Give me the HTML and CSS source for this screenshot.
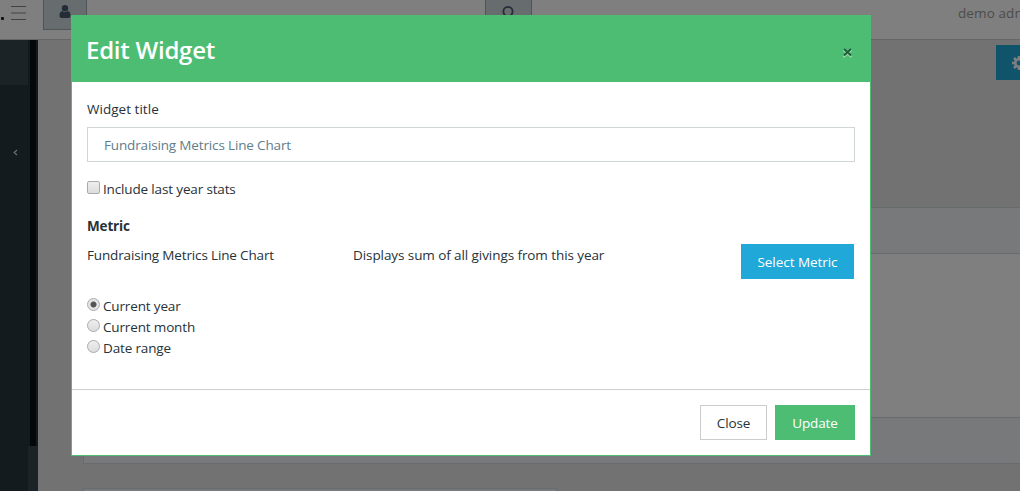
FILE: index.html
```html
<!DOCTYPE html>
<html lang="en">
<head>
<meta charset="utf-8">
<title>Edit Widget</title>
<link rel="stylesheet" href="styles.css">
</head>
<body>
<div class="app">
  <header class="topbar">
    <span class="brand-dot"></span>
    <svg class="menu" width="15" height="15" viewBox="0 0 15 15"><path d="M0 .5h15M0 7h15M0 13.500h15"/></svg>
    <div class="search">
      <span class="addon user"><svg width="12" height="13" viewBox="0 0 12 13"><circle cx="6" cy="3.300" r="3.200"/><path d="M3 6c2 1.500 4 1.500 6 0 2 .5 2.500 2.500 2.500 4.500C11.500 12 11 13 9.500 13h-7C1 13 .5 12 .5 10.500.5 8.500 1 6.500 3 6z"/></svg></span>
      <span class="search-field"></span>
      <span class="addon find"><svg width="14" height="14" viewBox="0 0 14 14"><circle cx="6" cy="5.500" r="4.600"/><path d="M9.500 9.500l4 4"/></svg></span>
    </div>
    <span class="account">demo admin</span>
  </header>
  <div class="workspace">
    <nav class="sidebar"><div class="nav-head"></div><span class="collapse"><svg width="5" height="7" viewBox="0 0 5 7"><path d="M4 1L1.200 3.500 4 6"/></svg></span></nav>
    <div class="scroll"><div class="track"></div><div class="thumb"></div></div>
    <main class="main">
      <div class="toolbar"><span class="settings"><svg width="14" height="14" viewBox="0 0 14 14"><circle cx="7" cy="7" r="3.700"/><path d="M7 0v3M7 11v3M0 7h3M11 7h3M2 2l2.200 2.200M9.800 9.800L12 12M12 2L9.800 4.200M4.200 9.800L2 12"/></svg></span></div>
      <section class="card"><div class="card-head"></div><div class="card-body"></div><div class="card-foot"></div></section>
      <section class="card half"><div class="card-head"></div></section>
    </main>
  </div>
</div>
<div class="backdrop">
  <div class="modal">
    <div class="modal-header"><h4 class="title">Edit Widget</h4><svg class="dismiss" width="11" height="11" viewBox="0 0 11 11"><path class="glow" d="M1.500 3l8 7M9.500 3l-8 7"/><path class="cross" d="M2 2l7 6.500M9 2L2 8.500"/></svg></div>
    <div class="modal-body">
      <label class="label">Widget title</label>
      <div class="field">Fundraising Metrics Line Chart</div>
      <label class="option include"><span class="checkbox"></span><span>Include last year stats</span></label>
      <div class="metric-title">Metric</div>
      <div class="metric-row">
        <div class="metric-name">Fundraising Metrics Line Chart</div>
        <div class="metric-desc">Displays sum of all givings from this year</div>
        <div class="btn primary">Select Metric</div>
      </div>
      <div class="radios">
        <label class="option"><span class="radio checked"></span><span>Current year</span></label>
        <label class="option"><span class="radio"></span><span>Current month</span></label>
        <label class="option"><span class="radio"></span><span>Date range</span></label>
      </div>
    </div>
    <div class="modal-footer"><div class="btn secondary">Close</div><div class="btn success">Update</div></div>
  </div>
</div>
</body>
</html>
```
FILE: styles.css
```css
* { box-sizing: border-box; }
body { margin: 0; height: 491px; overflow: hidden; font: 13.5px/21px "Open Sans", "Noto Sans", sans-serif; letter-spacing: -.15px; color: #263238; }
svg { display: block; flex: none; fill: none; }
.app { height: 491px; display: flex; flex-direction: column; background: #e4e5e6; overflow: hidden; }
.topbar { height: 40px; flex: none; display: flex; align-items: flex-start; background: #fff; border-bottom: 1px solid #c8cdd0; overflow: hidden; }
.brand-dot { flex: none; width: 3px; height: 3px; margin: 17px 8px 0 1px; background: #222; border-radius: 1px; }
.menu { margin: 6px 17px 0 -1px; stroke: #858585; stroke-width: 1.200; }
.search { flex: none; display: flex; width: 489px; height: 30px; }
.addon { display: flex; justify-content: center; background: #cfd8dc; border: solid #9aaab2; border-width: 0 1px 1px; }
.user { width: 44px; padding-top: 5px; }
.user svg { fill: #455a70; }
.search-field { flex: 1; border-bottom: 1px solid #ccc; }
.find { width: 47px; padding-top: 6px; }
.find svg { stroke: #455a70; stroke-width: 1.800; }
.account { margin: 3px 0 0 426px; color: #999; white-space: nowrap; letter-spacing: .1px; }
.workspace { flex: 1; display: flex; min-height: 0; }
.sidebar { width: 28px; background: #29363d; }
.nav-head { height: 45px; background: #37474f; }
.collapse { display: block; padding: 64px 0 0 13px; }
.collapse svg { stroke: #cfd8dc; stroke-width: 1.300; }
.scroll { width: 10px; display: flex; flex-direction: column; background: #29363d; }
.track { height: 406px; margin: 0 2px; background: #0b1013; }
.thumb { flex: 1; background: #37474f; }
.main { flex: 1; padding: 5px 0 0 45px; min-width: 0; }
.toolbar { height: 162px; display: flex; justify-content: flex-end; }
.settings { width: 24px; height: 35px; background: #20a8d8; padding: 11px 0 0 16px; overflow: hidden; }
.settings svg { stroke: #fff; stroke-width: 2.600; }
.card { border: 1px solid #cfd8dc; border-right: 0; margin-bottom: 24px; background: #fff; }
.card-head { height: 46px; background: #f0f3f5; border-bottom: 1px solid #cfd8dc; }
.card-body { height: 163px; }
.card-foot { height: 46px; background: #f0f3f5; border-top: 1px solid #cfd8dc; }
.half { width: 474px; border-right: 1px solid #cfd8dc; }
.backdrop { position: absolute; inset: 0; background: rgba(0,0,0,.5); padding: 15px 0 0 71px; }
.modal { width: 800px; height: 441px; display: flex; flex-direction: column; background: #fff; border: 1px solid #4dbd74; }
.modal-header { height: 66px; display: flex; justify-content: space-between; padding: 17px 17px 0 14px; background: #4dbd74; }
.title { margin: 0; color: #fff; font-size: 24px; line-height: 34px; font-weight: 600; letter-spacing: -.25px; }
.dismiss { margin-top: 14px; }
.glow { stroke: #a5dfb8; stroke-width: 2; }
.cross { stroke: #235c38; stroke-width: 2; }
.modal-body { flex: 1; padding: 17px 15px 0; }
.label { display: block; height: 28px; letter-spacing: .03px; }
.field { height: 35px; border: 1px solid #d0d5d7; padding: 7px 16px; color: #607d8b; }
.option { display: flex; height: 21px; align-items: center; }
.include { margin-top: 17px; }
.checkbox, .radio { width: 13px; height: 13px; margin: -4px 3px 0 0; border: 1px solid #aaa; background: linear-gradient(#eee, #ddd); }
.checkbox { border-radius: 2px; }
.radio { border-radius: 50%; }
.checked { background: radial-gradient(circle, #555 0 2.500px, #e5e5e5 3.500px); }
.metric-title { margin-top: 16px; font-weight: 700; }
.metric-row { display: flex; margin-top: 7px; height: 52px; }
.metric-name { width: 266px; padding-top: 1px; }
.metric-desc { flex: 1; padding-top: 1px; letter-spacing: -.08px; }
.btn { height: 35px; display: flex; justify-content: center; align-items: center; color: #fff; padding-top: 1px; }
.primary { width: 113px; background: #20a8d8; margin-right: 1px; letter-spacing: -.05px; }
.modal-footer { height: 66px; display: flex; justify-content: flex-end; gap: 8px; padding: 15px 15px 0; border-top: 1px solid #cfcfcf; }
.secondary { width: 67px; border: 1px solid #ccc; color: #263238; }
.success { width: 80px; background: #4dbd74; }
```
